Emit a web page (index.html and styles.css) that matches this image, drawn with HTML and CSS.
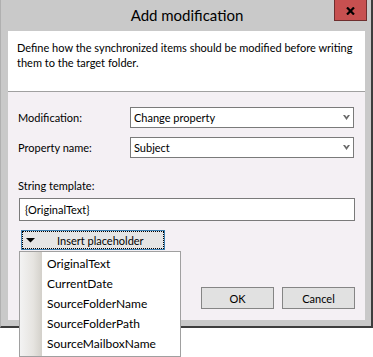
FILE: index.html
```html
<!DOCTYPE html>
<html lang="en">
<head>
<meta charset="utf-8">
<title>Add modification</title>
<link rel="stylesheet" href="styles.css">
</head>
<body>
<div class="window">
  <div class="titlebar">
    <div class="title">Add modification</div>
    <button class="close" aria-label="Close">
      <svg width="9" height="8" viewBox="0 0 9 8"><path d="M1 0.5 L8 7.5 M8 0.5 L1 7.5" stroke="#000" stroke-width="2.2" fill="none"/></svg>
    </button>
  </div>
  <div class="frame">
    <div class="client">
      <div class="header">
        <p class="desc">Define how the synchronized items should be modified before writing<br>them to the target folder.</p>
      </div>
      <div class="body">
        <div class="field-row">
          <span class="label">Modification:</span>
          <div class="combo"><span>Change property</span><svg class="chev" width="7" height="5" viewBox="0 0 7 5"><polygon points="0,0 2,0 3.5,2 5,0 7,0 3.5,5" fill="#6a6a6a"/></svg></div>
        </div>
        <div class="field-row">
          <span class="label">Property name:</span>
          <div class="combo"><span>Subject</span><svg class="chev" width="7" height="5" viewBox="0 0 7 5"><polygon points="0,0 2,0 3.5,2 5,0 7,0 3.5,5" fill="#6a6a6a"/></svg></div>
        </div>
        <div class="stack-label">String template:</div>
        <div class="textbox">{OriginalText}</div>
        <div class="placeholder-wrap">
          <button class="drop-btn"><svg class="tri" width="9" height="5" viewBox="0 0 9 5"><polygon points="0,0 9,0 4.5,4.5" fill="#000"/></svg><span class="drop-text">Insert placeholder</span></button>
          <ul class="menu">
            <li>OriginalText</li>
            <li>CurrentDate</li>
            <li>SourceFolderName</li>
            <li>SourceFolderPath</li>
            <li>SourceMailboxName</li>
          </ul>
        </div>
        <div class="actions">
          <button class="btn">OK</button>
          <button class="btn">Cancel</button>
        </div>
      </div>
    </div>
  </div>
</div>
</body>
</html>
```
FILE: styles.css
```css
* { box-sizing: border-box; }
html, body { margin: 0; padding: 0; background: #ffffff; }
html { height: 357px; overflow: hidden; }
body {
  height: 357px;
  font-family: "Segoe UI", Lato, "Noto Sans", sans-serif;
  font-size: 11px;
  color: #000;
}
.window {
  width: 373px;
  height: 328px;
  background: #c9c9c9;
  border-left: 1px solid #b0b0b0;
  border-right: 2px solid #3d3d3d;
  border-bottom: 2px solid #3d3d3d;
  display: flex;
  flex-direction: column;
}
.titlebar {
  flex: none;
  height: 31px;
  display: grid;
  grid-template-columns: 1fr auto 1fr;
}
.title {
  grid-column: 2;
  font-size: 15px;
  line-height: 31px;
  padding-left: 2px;
}
.close {
  grid-column: 3;
  justify-self: end;
  align-self: start;
  width: 33px;
  height: 21px;
  margin-right: 4px;
  padding: 2px 0 0;
  background: #c75050;
  border: 1px solid #6e2e2e;
  border-top: 0;
  display: flex;
  align-items: center;
  justify-content: center;
}
.frame {
  flex: 1;
  display: flex;
  padding: 0 7px 6px;
}
.client {
  flex: 1;
  display: flex;
  flex-direction: column;
  background: #f4f0f4;
}
.header {
  flex: none;
  height: 61px;
  background: #fff;
  border-bottom: 1px solid #a0a0a0;
  padding: 9px 9px 0;
}
.desc {
  margin: 0;
  line-height: 15px;
  white-space: nowrap;
}
.body {
  flex: 1;
  display: flex;
  flex-direction: column;
  padding: 15px 10px 11px;
  position: relative;
}
.field-row {
  display: grid;
  grid-template-columns: 112px 224px;
  align-items: center;
  height: 21px;
}
.field-row + .field-row { margin-top: 9px; }
.combo {
  height: 21px;
  border: 1px solid #7a7a7a;
  background: #fff;
  display: flex;
  align-items: center;
  justify-content: space-between;
  padding: 0 3px;
}
.chev { display: block; }
.stack-label {
  margin-top: 20px;
  line-height: 15px;
}
.textbox {
  margin-top: 5px;
  margin-left: 1px;
  width: 336px;
  height: 23px;
  border: 1px solid #7a7a7a;
  background: #fff;
  padding-left: 5px;
  line-height: 21px;
}
.placeholder-wrap {
  position: relative;
  margin-top: 9px;
  margin-left: 3px;
  width: 144px;
  z-index: 5;
}
.drop-btn {
  width: 144px;
  height: 20px;
  border: 1px solid #3c7fb1;
  background: #e5e5e5;
  outline: 1px dotted #000;
  outline-offset: -2px;
  display: flex;
  align-items: center;
  padding: 0 0 0 4px;
  font: inherit;
  color: #000;
}
.tri { display: block; flex: none; }
.drop-text { margin-left: 22px; }
.menu {
  position: absolute;
  left: -2px;
  top: 21px;
  width: 162px;
  margin: 0;
  padding: 2px 2px 2px 0;
  list-style: none;
  border: 1px solid #a0a0a0;
  background: linear-gradient(to right, #f3f3f3 0%, #e6e4e0 60%, #d3d0ca 100%) 0 0 / 22px 100% no-repeat, #fff;
  font-size: 12px;
  z-index: 2;
}
.menu li {
  height: 20px;
  line-height: 20px;
  padding-left: 27px;
}
.actions {
  margin-top: auto;
  display: flex;
  justify-content: flex-end;
  gap: 8px;
}
.btn {
  width: 73px;
  height: 22px;
  border: 1px solid #858585;
  background: #e1e1e1;
  font: inherit;
  color: #000;
  padding: 0;
}
```
